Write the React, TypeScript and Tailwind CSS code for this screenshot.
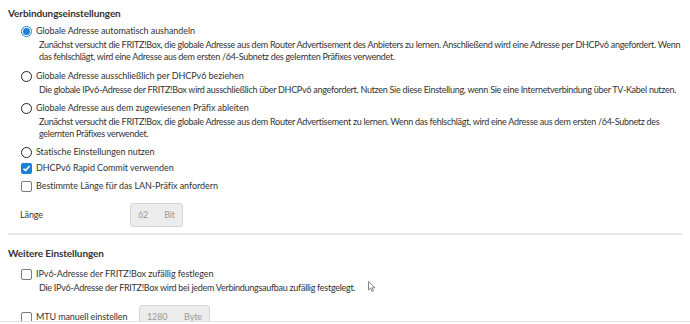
import React from "react";

function Radio({ checked }: { checked?: boolean }) {
  return checked ? (
    <span className="flex h-[11px] w-[11px] shrink-0 items-center justify-center rounded-full border border-[#1b7fd6] bg-white">
      <span className="h-[7px] w-[7px] rounded-full bg-[#1b7fd6]" />
    </span>
  ) : (
    <span className="h-[11px] w-[11px] shrink-0 rounded-full border-[1.5px] border-[#222]" />
  );
}

function Check({ checked }: { checked?: boolean }) {
  return checked ? (
    <span className="flex h-[11px] w-[11px] shrink-0 items-center justify-center rounded-[2px] bg-[#1b7fd6]">
      <svg width="9" height="9" viewBox="0 0 9 9">
        <path d="M1.5 4.6 L3.6 6.6 L7.6 2" stroke="white" strokeWidth="1.5" fill="none" />
      </svg>
    </span>
  ) : (
    <span className="h-[11px] w-[11px] shrink-0 rounded-[2px] border border-[#7a7a7a] bg-white" />
  );
}

function Option({
  control,
  label,
  desc,
  className = "",
}: {
  control: React.ReactNode;
  label: string;
  desc?: string;
  className?: string;
}) {
  return (
    <div className={className}>
      <div className="flex h-[14px] items-center gap-[4px] pl-[13px]">
        {control}
        <span className="tracking-[-0.06px] text-[#333]">{label}</span>
      </div>
      {desc && <p className="pl-[31px] pt-[1px] leading-[12px] tracking-[-0.28px] text-[#333]">{desc}</p>}
    </div>
  );
}

function Field({ value, unit, w }: { value: string; unit: string; w: string }) {
  return (
    <div className={`flex h-[24px] items-center justify-between rounded-[3px] border border-[#d4d4d4] bg-[#ececec] px-[7px] text-[#9a9a9a] ${w}`}>
      <span>{value}</span>
      <span>{unit}</span>
    </div>
  );
}

export default function App() {
  return (
    <div className="relative h-[324px] w-[690px] overflow-hidden bg-white font-['Lato','Open_Sans',sans-serif] text-[9px] tracking-[-0.1px]">
      <div className="pl-[8px] pr-[5px]">
        <h2 className="pt-[6px] text-[10px] font-bold leading-[14px] tracking-[-0.1px] text-[#333]">Verbindungseinstellungen</h2>
        <Option
          className="mt-[4px]"
          control={<Radio checked />}
          label="Globale Adresse automatisch aushandeln"
          desc="Zunächst versucht die FRITZ!Box, die globale Adresse aus dem Router Advertisement des Anbieters zu lernen. Anschließend wird eine Adresse per DHCPv6 angefordert. Wenn das fehlschlägt, wird eine Adresse aus dem ersten /64-Subnetz des gelernten Präfixes verwendet."
        />
        <Option
          className="mt-[6px]"
          control={<Radio />}
          label="Globale Adresse ausschließlich per DHCPv6 beziehen"
          desc="Die globale IPv6-Adresse der FRITZ!Box wird ausschließlich über DHCPv6 angefordert. Nutzen Sie diese Einstellung, wenn Sie eine Internetverbindung über TV-Kabel nutzen."
        />
        <Option
          className="mt-[5px]"
          control={<Radio />}
          label="Globale Adresse aus dem zugewiesenen Präfix ableiten"
          desc="Zunächst versucht die FRITZ!Box, die globale Adresse aus dem Router Advertisement zu lernen. Wenn das fehlschlägt, wird eine Adresse aus dem ersten /64-Subnetz des gelernten Präfixes verwendet."
        />
        <Option className="mt-[5px]" control={<Radio />} label="Statische Einstellungen nutzen" />
        <Option className="mt-[2px]" control={<Check checked />} label="DHCPv6 Rapid Commit verwenden" />
        <Option className="mt-[4px]" control={<Check />} label="Bestimmte Länge für das LAN-Präfix anfordern" />
        <div className="mt-[10px] flex items-center">
          <span className="w-[122px] pl-[12px] text-[#333]">Länge</span>
          <Field value="62" unit="Bit" w="w-[53px]" />
        </div>
        <div className="mt-[6px] h-[2px] w-[674px] bg-[#e8e8e8]" />
        <h2 className="mt-[11px] text-[10px] font-bold leading-[14px] tracking-[-0.1px] text-[#333]">Weitere Einstellungen</h2>
        <Option
          className="mt-[7px]"
          control={<Check />}
          label="IPv6-Adresse der FRITZ!Box zufällig festlegen"
          desc="Die IPv6-Adresse der FRITZ!Box wird bei jedem Verbindungsaufbau zufällig festgelegt."
        />
        <div className="mt-[11px] flex items-center">
          <div className="flex w-[131px] items-center gap-[4px] pl-[13px]">
            <Check />
            <span className="text-[#333]">MTU manuell einstellen</span>
          </div>
          <Field value="1280" unit="Byte" w="w-[71px]" />
        </div>
      </div>
      <div className="absolute bottom-0 left-0 h-[3px] w-full border-t border-[#e2e2e2] bg-white" />
      <svg className="absolute left-[368px] top-[281px]" width="9" height="12" viewBox="0 0 9 12">
        <path d="M0.5 0.5 L0.5 9 L2.6 7.2 L4 10.5 L5.4 9.9 L4 6.8 L7 6.8 Z" fill="white" stroke="#666" strokeWidth="0.8" />
      </svg>
    </div>
  );
}
